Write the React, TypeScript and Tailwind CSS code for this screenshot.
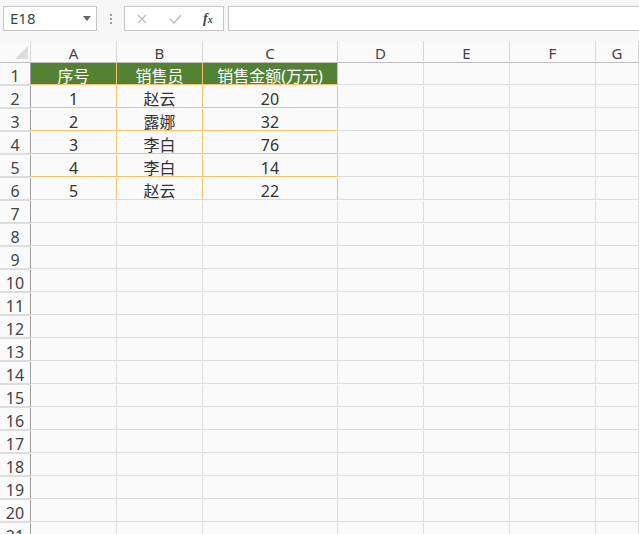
const COLS = ["A", "B", "C", "D", "E", "F", "G"];

const DATA: string[][] = [
  ["序号", "销售员", "销售金额(万元)"],
  ["1", "赵云", "20"],
  ["2", "露娜", "32"],
  ["3", "李白", "76"],
  ["4", "李白", "14"],
  ["5", "赵云", "22"],
];

const gridCols = "grid grid-cols-[31px_86px_86px_135px_86px_86px_86px_1fr]";

function Toolbar() {
  return (
    <div className="flex h-[41px] items-start bg-[#f7f7f7] pt-[6px]">
      <div className="ml-[3px] flex h-[25px] w-[94px] items-center justify-between border border-[#c6c6c6] bg-white pl-[6px] pr-[5px]">
        <span className="text-[15px] leading-none text-[#444]">E18</span>
        <svg width="8" height="5" viewBox="0 0 8 5">
          <path d="M0 0h8L4 5z" fill="#666" />
        </svg>
      </div>
      <div className="ml-[13px] mr-[12px] flex h-[25px] flex-col items-center justify-center gap-[2px]">
        <span className="h-[2px] w-[2px] bg-[#999]" />
        <span className="h-[2px] w-[2px] bg-[#999]" />
        <span className="h-[2px] w-[2px] bg-[#999]" />
      </div>
      <div className="flex h-[25px] w-[100px] items-center border border-[#c6c6c6] bg-white">
        <svg className="ml-[12px]" width="10" height="10" viewBox="0 0 10 10">
          <path d="M1 1l8 8M9 1l-8 8" stroke="#bbb" strokeWidth="1.3" />
        </svg>
        <svg className="ml-[22px]" width="13" height="10" viewBox="0 0 13 10">
          <path d="M1 5l4 4 7-8" stroke="#bbb" strokeWidth="1.5" fill="none" />
        </svg>
        <span className="ml-[21px] font-['Liberation_Serif',serif] text-[14px] font-bold italic text-[#444]">
          f<span className="text-[10px]">x</span>
        </span>
      </div>
      <div className="ml-[4px] h-[25px] flex-1 border border-r-0 border-[#c6c6c6] bg-white" />
    </div>
  );
}

function HeaderRow() {
  return (
    <div className={`${gridCols} h-[22px] border-b border-[#bdbdbd]`}>
      <div className="relative border-r border-[#d4d4d4]">
        <svg className="absolute left-[15px] top-[5px]" width="13" height="13" viewBox="0 0 13 13">
          <path d="M13 0v13H0z" fill="#dcdcdc" />
        </svg>
      </div>
      {COLS.map((c) => (
        <div
          key={c}
          className="flex items-center justify-center border-r border-[#d4d4d4] pt-[4px] text-[15px] leading-none text-[#444]"
        >
          {c}
        </div>
      ))}
      <div />
    </div>
  );
}

function Row({ n }: { n: number }) {
  const data = DATA[n - 1];
  const inTable = n <= 6;
  return (
    <div className={`${gridCols} h-[23px]`}>
      <div className="flex items-center justify-center border-r border-b border-r-[#9e9e9e] border-b-[#dcdcdc] pt-[5px] text-[16px] leading-none text-[#444]">
        {n}
      </div>
      {COLS.map((c, i) => {
        const table = inTable && i < 3;
        const header = n === 1 && i < 3;
        const below6 = n === 6 && i < 3;
        let cls = "flex items-center justify-center pt-[5px] leading-none ";
        if (table) {
          cls += "border-r border-b border-[#f7c46e] ";
        } else {
          cls += "border-r border-b border-[#dedede] ";
        }
        if (header) cls += "bg-[#548235] text-white text-[16px] ";
        else cls += "text-[#333] text-[16px] ";
        if (below6) cls += "border-b-[#fbd89a] ";
        return (
          <div key={c} className={cls}>
            {table ? data[i] : ""}
          </div>
        );
      })}
      <div className="border-b border-[#dedede]" />
    </div>
  );
}

export default function App() {
  const rows = Array.from({ length: 21 }, (_, i) => i + 1);
  return (
    <div className="h-[534px] w-[639px] overflow-hidden bg-[#fafafa] font-['Noto_Sans','Noto_Sans_CJK_SC',sans-serif]">
      <Toolbar />
      <HeaderRow />
      {rows.map((n) => (
        <Row key={n} n={n} />
      ))}
    </div>
  );
}
